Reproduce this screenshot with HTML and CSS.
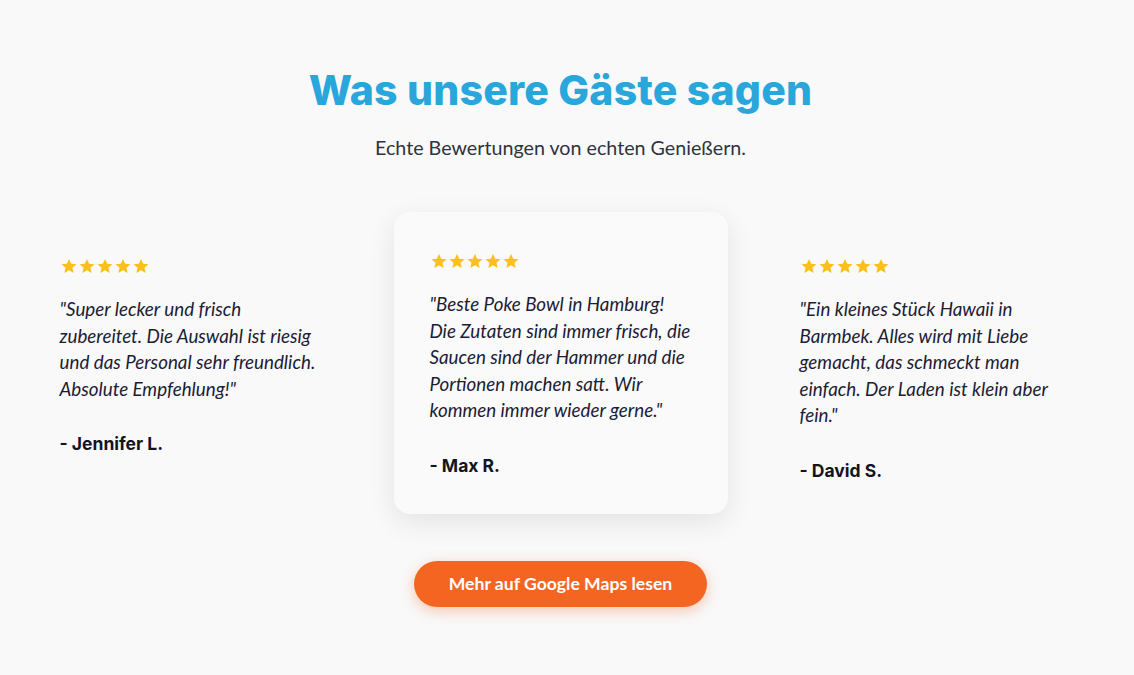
FILE: index.html
```html
<!DOCTYPE html>
<html lang="de">
<head>
<meta charset="utf-8">
<title>Bewertungen</title>
<link rel="stylesheet" href="styles.css">
</head>
<body>
<main class="page">
  <section class="reviews">
    <h2 class="reviews-title">Was unsere Gäste sagen</h2>
    <p class="reviews-sub">Echte Bewertungen von echten Genießern.</p>
    <div class="review-grid">
      <article class="review-card">
        <div class="stars">
          <svg viewBox="0 0 24 24"><path d="M12 2.5l2.9 6.6 7.1.6-5.4 4.7 1.6 7-6.2-3.7-6.2 3.7 1.6-7L2 9.7l7.1-.6z"/></svg>
          <svg viewBox="0 0 24 24"><path d="M12 2.5l2.9 6.6 7.1.6-5.4 4.7 1.6 7-6.2-3.7-6.2 3.7 1.6-7L2 9.7l7.1-.6z"/></svg>
          <svg viewBox="0 0 24 24"><path d="M12 2.5l2.9 6.6 7.1.6-5.4 4.7 1.6 7-6.2-3.7-6.2 3.7 1.6-7L2 9.7l7.1-.6z"/></svg>
          <svg viewBox="0 0 24 24"><path d="M12 2.5l2.9 6.6 7.1.6-5.4 4.7 1.6 7-6.2-3.7-6.2 3.7 1.6-7L2 9.7l7.1-.6z"/></svg>
          <svg viewBox="0 0 24 24"><path d="M12 2.5l2.9 6.6 7.1.6-5.4 4.7 1.6 7-6.2-3.7-6.2 3.7 1.6-7L2 9.7l7.1-.6z"/></svg>
        </div>
        <p class="quote">"Super lecker und frisch zubereitet. Die Auswahl ist riesig und das Personal sehr freundlich. Absolute Empfehlung!"</p>
        <p class="author">- Jennifer L.</p>
      </article>
      <article class="review-card featured">
        <div class="stars">
          <svg viewBox="0 0 24 24"><path d="M12 2.5l2.9 6.6 7.1.6-5.4 4.7 1.6 7-6.2-3.7-6.2 3.7 1.6-7L2 9.7l7.1-.6z"/></svg>
          <svg viewBox="0 0 24 24"><path d="M12 2.5l2.9 6.6 7.1.6-5.4 4.7 1.6 7-6.2-3.7-6.2 3.7 1.6-7L2 9.7l7.1-.6z"/></svg>
          <svg viewBox="0 0 24 24"><path d="M12 2.5l2.9 6.6 7.1.6-5.4 4.7 1.6 7-6.2-3.7-6.2 3.7 1.6-7L2 9.7l7.1-.6z"/></svg>
          <svg viewBox="0 0 24 24"><path d="M12 2.5l2.9 6.6 7.1.6-5.4 4.7 1.6 7-6.2-3.7-6.2 3.7 1.6-7L2 9.7l7.1-.6z"/></svg>
          <svg viewBox="0 0 24 24"><path d="M12 2.5l2.9 6.6 7.1.6-5.4 4.7 1.6 7-6.2-3.7-6.2 3.7 1.6-7L2 9.7l7.1-.6z"/></svg>
        </div>
        <p class="quote">"Beste Poke Bowl in Hamburg! Die Zutaten sind immer frisch, die Saucen sind der Hammer und die Portionen machen satt. Wir kommen immer wieder gerne."</p>
        <p class="author">- Max R.</p>
      </article>
      <article class="review-card">
        <div class="stars">
          <svg viewBox="0 0 24 24"><path d="M12 2.5l2.9 6.6 7.1.6-5.4 4.7 1.6 7-6.2-3.7-6.2 3.7 1.6-7L2 9.7l7.1-.6z"/></svg>
          <svg viewBox="0 0 24 24"><path d="M12 2.5l2.9 6.6 7.1.6-5.4 4.7 1.6 7-6.2-3.7-6.2 3.7 1.6-7L2 9.7l7.1-.6z"/></svg>
          <svg viewBox="0 0 24 24"><path d="M12 2.5l2.9 6.6 7.1.6-5.4 4.7 1.6 7-6.2-3.7-6.2 3.7 1.6-7L2 9.7l7.1-.6z"/></svg>
          <svg viewBox="0 0 24 24"><path d="M12 2.5l2.9 6.6 7.1.6-5.4 4.7 1.6 7-6.2-3.7-6.2 3.7 1.6-7L2 9.7l7.1-.6z"/></svg>
          <svg viewBox="0 0 24 24"><path d="M12 2.5l2.9 6.6 7.1.6-5.4 4.7 1.6 7-6.2-3.7-6.2 3.7 1.6-7L2 9.7l7.1-.6z"/></svg>
        </div>
        <p class="quote">"Ein kleines Stück Hawaii in Barmbek. Alles wird mit Liebe gemacht, das schmeckt man einfach. Der Laden ist klein aber fein."</p>
        <p class="author">- David S.</p>
      </article>
    </div>
    <div class="cta">
      <a class="cta-btn" href="#">Mehr auf Google Maps lesen</a>
    </div>
  </section>
</main>
</body>
</html>
```

FILE: styles.css
```css
* { box-sizing: border-box; }

html, body {
  margin: 0;
  background: #f9f9f9;
}

body {
  font-family: "Lato", "Liberation Sans", sans-serif;
  color: #1c1c35;
}

.page {
  padding-right: 13px;
}

.reviews {
  padding: 66px 0 60px;
  text-align: center;
}

.reviews-title {
  margin: 0;
  font-family: "Inter", "Noto Sans", sans-serif;
  font-weight: 800;
  font-size: 41px;
  line-height: 48px;
  color: #29a7dc;
  letter-spacing: 0.2px;
}

.reviews-sub {
  margin: 20px 0 0;
  font-size: 19.7px;
  line-height: 27px;
  color: #2f3340;
}

.review-grid {
  display: grid;
  grid-template-columns: repeat(3, 334px);
  column-gap: 36px;
  justify-content: center;
  margin-top: 56px;
  text-align: left;
}

.review-card {
  padding: 40px 35px 38px 36px;
  border-radius: 16px;
  background: transparent;
}

.review-card.featured {
  background: #fafafa;
  transform: translateY(-5px);
  box-shadow: 0 8px 28px rgba(0, 0, 0, 0.09);
}

.stars {
  display: flex;
  height: 18px;
}

.stars svg {
  width: 18px;
  height: 18px;
  fill: #fbc11a;
}

.quote {
  margin: 21px 0 0;
  font-style: italic;
  font-size: 18.8px;
  line-height: 26.6px;
  color: #1c1c35;
}

.author {
  margin: 31px 0 0;
  font-family: "Inter", "Noto Sans", sans-serif;
  font-weight: 700;
  font-size: 17.5px;
  line-height: 21px;
  color: #14141f;
}

.cta {
  margin-top: 42px;
  display: flex;
  justify-content: center;
}

.cta-btn {
  display: inline-flex;
  align-items: center;
  justify-content: center;
  width: 293px;
  height: 46px;
  border-radius: 23px;
  background: #f46522;
  color: #ffffff;
  font-weight: 700;
  font-size: 17.6px;
  text-decoration: none;
  box-shadow: 0 4px 14px rgba(244, 101, 34, 0.35);
}
```
